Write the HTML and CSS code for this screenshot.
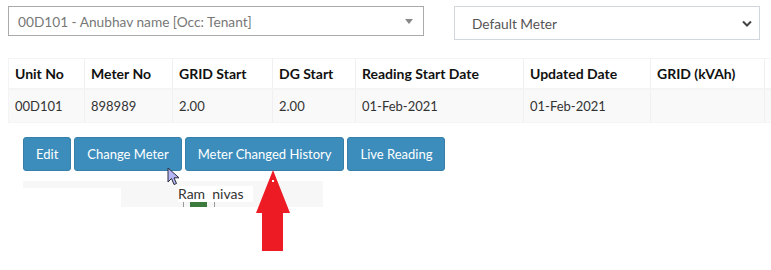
FILE: index.html
```html
<!DOCTYPE html>
<html lang="en">
<head>
<meta charset="UTF-8" />
<meta name="viewport" content="width=device-width, initial-scale=1" />
<title>Meter Reading</title>
<link rel="stylesheet" href="styles.css">
</head>
<body>
  <div class="page">
    <div class="filters">
      <div class="combo">
        <span class="combo-text">00D101 - Anubhav name [Occ: Tenant]</span>
        <span class="combo-arrow"></span>
      </div>
      <div class="picker">
        <span class="picker-text">Default Meter</span>
        <svg class="chevron" width="10" height="7" viewBox="0 0 10 7">
          <path d="M1 1.5 L5 5.5 L9 1.5" fill="none" stroke="#444" stroke-width="2"/>
        </svg>
      </div>
    </div>

    <div class="table-wrap">
      <table class="meters">
        <thead>
          <tr>
            <th class="c1">Unit No</th>
            <th class="c2">Meter No</th>
            <th class="c3">GRID Start</th>
            <th class="c4">DG Start</th>
            <th class="c5">Reading Start Date</th>
            <th class="c6">Updated Date</th>
            <th class="c7">GRID (kVAh)</th>
            <th class="c8">DG (kVAh)</th>
          </tr>
        </thead>
        <tbody>
          <tr>
            <td>00D101</td>
            <td>898989</td>
            <td>2.00</td>
            <td>2.00</td>
            <td>01-Feb-2021</td>
            <td>01-Feb-2021</td>
            <td></td>
            <td></td>
          </tr>
        </tbody>
      </table>
    </div>

    <div class="actions">
      <button class="btn">Edit</button>
      <button class="btn">Change Meter</button>
      <button class="btn">Meter Changed History</button>
      <button class="btn">Live Reading</button>
    </div>

    <div class="chart">
      <div class="chart-blank"></div>
      <div class="chart-label">
        <span class="label-text">Ram&nbsp; nivas</span>
        <span class="tick tick-left"></span>
        <span class="bar"></span>
        <span class="tick tick-right"></span>
      </div>
    </div>
  </div>

  <svg class="cursor" width="14" height="20" viewBox="0 0 14 20">
    <path d="M1 1 L1 15 L4.5 11.5 L7 17.5 L9.5 16.5 L7 10.8 L12 10.8 Z" fill="#b4b6f6" stroke="#2a2a3a" stroke-width="1"/>
  </svg>

  <svg class="red-arrow" width="36" height="82" viewBox="0 0 36 82">
    <path d="M18 0 L35 43 L28 43 L28 81 L7 81 L7 43 L1 43 Z" fill="#ed1c24"/>
    <rect x="17" y="10" width="2" height="2" fill="#fff"/>
  </svg>
</body>
</html>
```

FILE: styles.css
```css
body {
  margin: 0;
  background-color: #fff;
  font-family: Lato, "Open Sans", sans-serif;
  font-size: 14px;
  color: #333;
  overflow: hidden;
}
.page {
  padding: 6px 0 0 8px;
}
.filters {
  display: flex;
  align-items: flex-start;
  gap: 30px;
}
.combo {
  width: 395px;
  height: 28px;
  border: 1px solid #aaa;
  display: flex;
  align-items: center;
  justify-content: space-between;
  padding: 0 10px 0 9px;
  font-size: 13.7px;
}
.combo-text {
  color: #777;
}
.combo-arrow {
  width: 0;
  height: 0;
  border-left: 4px solid transparent;
  border-right: 4px solid transparent;
  border-top: 5px solid #888;
}
.picker {
  width: 306px;
  height: 34px;
  border: 1px solid #d2d6de;
  display: flex;
  align-items: center;
  justify-content: space-between;
  padding: 0 7px 0 17px;
  box-sizing: border-box;
  font-size: 13.7px;
}
.picker-text {
  color: #555;
}
.table-wrap {
  margin-top: 18px;
  width: 763px;
  overflow: hidden;
}
.meters {
  border-collapse: collapse;
  table-layout: fixed;
  width: 866px;
  border: 1px solid #f4f4f4;
}
.meters th,
.meters td {
  padding: 0 6px;
  text-align: left;
  border-right: 1px solid #f0f0f0;
  white-space: nowrap;
}
.meters th {
  height: 29px;
  font-weight: bold;
  color: #111;
  background-color: #fff;
  border-bottom: 2px solid #f4f4f4;
}
.meters td {
  height: 32px;
  font-size: 13px;
  background-color: #f9f9f9;
  color: #333;
}
.c1 { width: 63px; }
.c2 { width: 75px; }
.c3 { width: 87px; }
.c4 { width: 70px; }
.c5 { width: 155px; }
.c6 { width: 114px; }
.c7 { width: 101px; }
.c8 { width: 97px; }
.actions {
  display: flex;
  gap: 3px;
  margin: 14px 0 0 15px;
}
.btn {
  font-family: inherit;
  font-size: 13px;
  color: #fff;
  background-color: #3c8dbc;
  border: 1px solid #367fa9;
  border-radius: 3px;
  height: 34px;
  padding: 0 12px;
  cursor: pointer;
}
.chart {
  position: relative;
  margin: 10px 0 0 15px;
  width: 300px;
  height: 26px;
  background-color: #f7f7f7;
}
.chart-blank {
  position: absolute;
  left: 0;
  top: 7px;
  width: 98px;
  height: 19px;
  background-color: #fff;
}
.chart-label {
  position: absolute;
  left: 155px;
  top: 5px;
  width: 75px;
  height: 21px;
}
.label-text {
  display: block;
  background-color: #fff;
  color: #333;
  height: 16px;
  line-height: 16px;
  font-size: 14px;
}
.tick {
  position: absolute;
  top: 16px;
  width: 1px;
  height: 5px;
  background-color: #999;
}
.tick-left { left: 5px; }
.tick-right { left: 36px; }
.bar {
  position: absolute;
  top: 16px;
  left: 12px;
  width: 17px;
  height: 5px;
  background-color: #3d7a3d;
}
.cursor {
  position: absolute;
  left: 167px;
  top: 167px;
}
.red-arrow {
  position: absolute;
  left: 255px;
  top: 170px;
}
```
